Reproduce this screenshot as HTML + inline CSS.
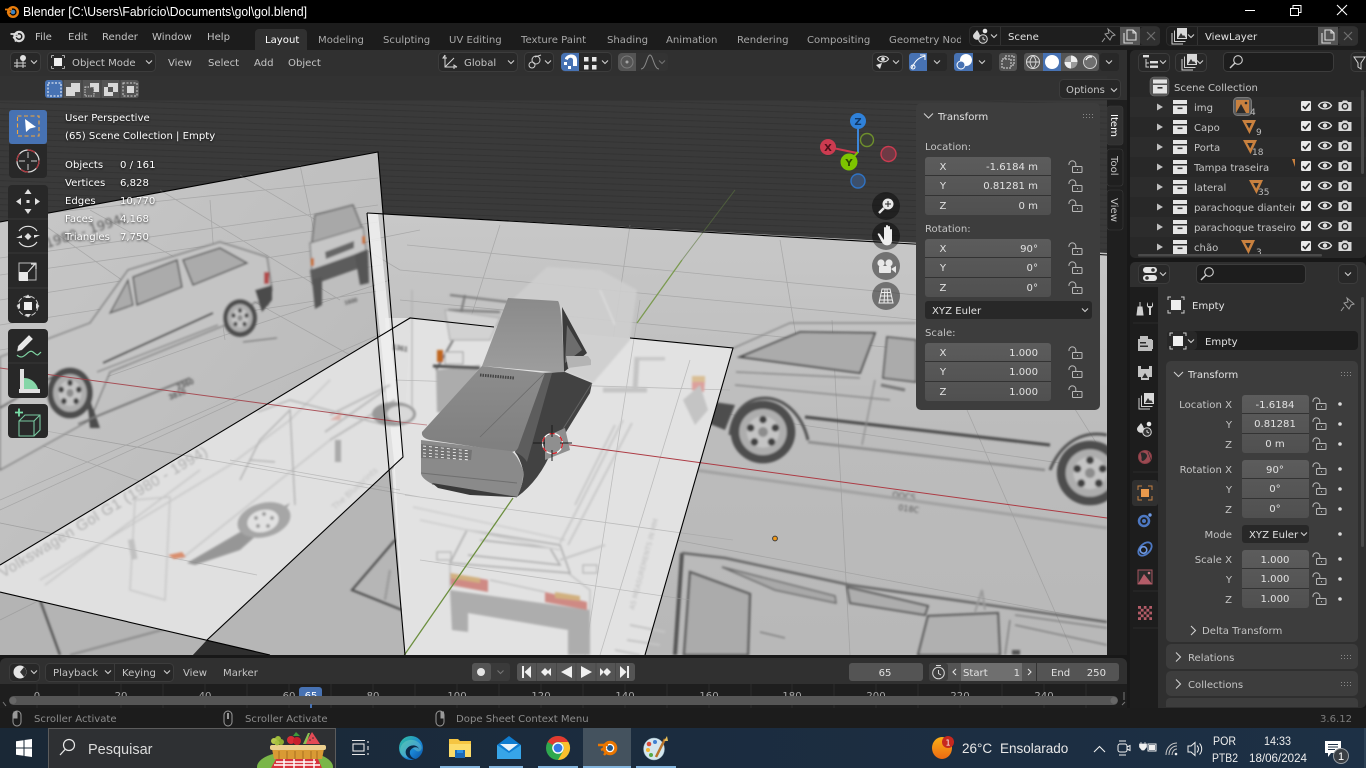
<!DOCTYPE html>
<html lang="pt"><head><meta charset="utf-8"><title>Blender</title>
<style>
html,body{margin:0;padding:0;background:#181818;width:1366px;height:768px;overflow:hidden}
svg{display:block}
text{font-family:"DejaVu Sans","Liberation Sans",sans-serif;font-size:10.1px;fill:#d4d4d4;white-space:pre}
.m{fill:#c4c4c4}
.w{fill:#fff}
.d{fill:#a8a8a8}
.f{fill:#e2e2e2}
.c{text-anchor:middle}
.r{text-anchor:end}
.s{fill:#fff;filter:drop-shadow(0 1px 1px rgba(0,0,0,.75))}
.t{font-family:"Liberation Sans",sans-serif;fill:#fff}
.st{fill:#8c8c8c}
.p{font-family:"Liberation Sans",sans-serif;fill:#555;font-weight:bold}
.l{font-family:"Liberation Sans",sans-serif;font-size:12px;fill:#eee}
</style></head><body>
<svg width="1366" height="768" viewBox="0 0 1366 768" xmlns="http://www.w3.org/2000/svg">
<defs>
<pattern id="gl" width="8" height="6" patternUnits="userSpaceOnUse" patternTransform="rotate(2)"><rect width="8" height="6" fill="#3a3a3a"/><rect width="8" height="1" fill="#333"/></pattern>
<filter id="b" x="-5%" y="-5%" width="110%" height="110%"><feGaussianBlur stdDeviation="1"/></filter>
<linearGradient id="pg" x1="0" y1="0" x2="1" y2="1"><stop offset="0" stop-color="#c8c8c8"/><stop offset="1" stop-color="#b6b6b6"/></linearGradient>
<linearGradient id="pg2" x1="0" y1="0" x2="0" y2="1"><stop offset="0" stop-color="#c8c8c8"/><stop offset=".5" stop-color="#bcbcbc"/><stop offset="1" stop-color="#b8b8b8"/></linearGradient>
<linearGradient id="hood" x1="0" y1="0" x2="0" y2="1"><stop offset="0" stop-color="#8d8d8d"/><stop offset="1" stop-color="#7f7f7f"/></linearGradient>
<linearGradient id="wind" x1="0" y1="0" x2="0" y2="1"><stop offset="0" stop-color="#8a8a8a"/><stop offset="1" stop-color="#9d9d9d"/></linearGradient>
<linearGradient id="tb" x1="0" y1="0" x2="1" y2="0"><stop offset="0" stop-color="#1a2836"/><stop offset=".5" stop-color="#1b2c3f"/><stop offset="1" stop-color="#1d3045"/></linearGradient>
<linearGradient id="fd" x1="0" y1="0" x2="0" y2="1"><stop offset="0" stop-color="#5c5c5c"/><stop offset="1" stop-color="#505050"/></linearGradient>
<linearGradient id="edge" x1="0" y1="0" x2="1" y2="1"><stop offset="0" stop-color="#36c4a0"/><stop offset=".6" stop-color="#1a86d6"/><stop offset="1" stop-color="#0a4fa0"/></linearGradient>
<linearGradient id="wx" x1="0" y1="0" x2="0" y2="1"><stop offset="0" stop-color="#fbb017"/><stop offset="1" stop-color="#ec6a12"/></linearGradient>

<g id="lock" fill="none" stroke="#b8b8b8" stroke-width="1"><path d="M0 5A3.4 3.4 0 0 1 6.8 3.6V6.5"/><rect x="3.5" y="6.5" width="9.5" height="6" rx=".6"/><rect x="8" y="9" width="1" height="1.4" fill="#b8b8b8" stroke="none"/></g>
<g id="coll"><rect x="0" y="0" width="14" height="4" fill="#e4e4e4"/><path d="M0 5.5H14V14H0Z" fill="#e4e4e4"/><rect x="4.5" y="7.5" width="5" height="1.6" fill="#333"/></g>
<g id="chk"><rect width="10" height="10" rx="1.2" fill="#e9e9e9"/><path d="M1.8 5.2L4.2 7.6L8.6 2.4" fill="none" stroke="#282828" stroke-width="1.6"/></g>
<g id="eye"><path d="M-6.5 0C-4 -4.500 4 -4.500 6.5 0C4 4.500 -4 4.500 -6.5 0Z" fill="none" stroke="#e2e2e2" stroke-width="1.300"/><circle r="2.200" fill="#e2e2e2"/></g>
<g id="cam"><path d="M-6.5 -4H-3L-2 -5.5H2L3 -4H6.5V5H-6.5Z" fill="#d8d8d8"/><circle r="3.4" cy=".3" fill="#2a2a2a"/><circle r="2" cy=".3" fill="#d8d8d8"/></g>
<g id="tri"><path d="M0 0H14L7.5 14Z" fill="#c9813f"/><path d="M4.2 3H9.8L7.2 8.5Z" fill="#2b2b2b"/></g>
<g id="chev"><path d="M-3 -1.5L0 1.5L3 -1.5" fill="none" stroke="#d0d0d0" stroke-width="1.1"/></g>
<g id="dots" fill="#8a8a8a"><rect width="1" height="1"/><rect x="3" width="1" height="1"/><rect x="6" width="1" height="1"/><rect x="9" width="1" height="1"/><rect y="3" width="1" height="1"/><rect x="3" y="3" width="1" height="1"/><rect x="6" y="3" width="1" height="1"/><rect x="9" y="3" width="1" height="1"/></g>
<g id="mouse"><rect x="-4" y="-8" width="8" height="15" rx="4" fill="none" stroke="#9a9a9a"/></g>
<g id="objic"><path d="M-8 -5V-8H-5M5 -8H8V-5M8 5V8H5M-5 8H-8V5" fill="none" stroke="#cfcfcf" stroke-width="1"/><rect x="-5" y="-5" width="10" height="10" fill="#eee"/></g>
<g id="vlayer"><path d="M-6 -3V8H5" fill="none" stroke="#d0d0d0"/><path d="M-3.5 -5.5V5.5H7.500" fill="none" stroke="#d0d0d0"/><rect x="-1" y="-8" width="10" height="11" fill="#d8d8d8"/><path d="M0 2L3 -3L5 0L6 -1L8 2Z" fill="#333"/></g>
<g id="scn"><path d="M-5 -6C-2 -2 -1 1 -3 3C-5 5 -9 3 -9 0C-9 -2 -6 -4 -5 -6Z" fill="#d8d8d8"/><circle cx="3" cy="-5" r="2.3" fill="#e8e8e8"/><circle cx="1" cy="3" r="4.300" fill="#333" stroke="#d8d8d8"/><path d="M1 1V3L3 4" stroke="#d8d8d8" fill="none"/></g>
<g id="search"><circle cx="2" cy="-2" r="4.3" fill="none" stroke="#cfcfcf" stroke-width="1.1"/><path d="M-1 1L-6 6" stroke="#cfcfcf" stroke-width="1.4"/></g>
<g id="copy" fill="none" stroke="#dcdcdc" stroke-width="1.1"><path d="M-3 -6H3L6 -3V4H-3Z"/><path d="M-6 -3V7H3"/><path d="M3 -6V-3H6"/></g>
<g id="x"><path d="M-4 -4L4 4M4 -4L-4 4" stroke="#6f6f6f" stroke-width="1.2"/></g>
<g id="pin" fill="none" stroke="#9c9c9c" stroke-width="1"><path d="M-1 -7L6 -1L3 0L1 4L-4 -2L0 -3ZM-4 2L-7 6"/></g>
<g id="wh"><ellipse rx="17" ry="19" fill="#4e4e4e"/><ellipse rx="12.500" ry="14" fill="#adadad"/><ellipse rx="8.500" ry="9.500" fill="#c4c4c4"/><g fill="#3f3f3f"><ellipse cx="0" cy="-7.500" rx="2" ry="2.300"/><ellipse cx="6.500" cy="-2.500" rx="2" ry="2.300"/><ellipse cx="4.500" cy="6" rx="2" ry="2.300"/><ellipse cx="-4.500" cy="6" rx="2" ry="2.300"/><ellipse cx="-6.500" cy="-2.500" rx="2" ry="2.300"/></g><ellipse rx="2.600" ry="3" fill="#8c8c8c"/></g>
</defs>

<!-- base -->
<rect width="1366" height="768" fill="#181818"/>
<!-- title bar -->
<rect width="1366" height="23" fill="#000"/>
<g transform="translate(4,5)"><circle cx="9" cy="7" r="4.800" fill="none" stroke="#e87d0d" stroke-width="2.400"/><circle cx="9" cy="7" r="2.300" fill="#3f81bd"/><path d="M1 4.500H8M3 8L7 6.500M5 11.500L7 9.500" stroke="#e87d0d" stroke-width="1.800" fill="none"/></g>
<text x="23" y="16" class="t" style="font-size:13px" textLength="284" lengthAdjust="spacingAndGlyphs">Blender [C:\Users\Fabrício\Documents\gol\gol.blend]</text>
<path d="M1245 10.500H1255" stroke="#fff"/>
<path d="M1290.500 8.500H1298.500V15.500H1290.500ZM1293 8V5.500H1301V12.500H1298.500" fill="none" stroke="#fff"/>
<path d="M1337 5L1347 15M1347 5L1337 15" stroke="#fff" stroke-width="1.100"/>

<!-- top bar -->
<rect y="23" width="1366" height="27" fill="#1c1c1c"/>
<g transform="translate(10,29)"><circle cx="9" cy="7.500" r="4.600" fill="none" stroke="#dcdcdc" stroke-width="2.200"/><circle cx="9" cy="7.500" r="2" fill="#dcdcdc"/><path d="M0.500 5H8M3 9L7 7M5 12.500L7 10" stroke="#dcdcdc" stroke-width="1.700" fill="none"/></g>
<text x="35" y="40" class="m">File</text><text x="68" y="40" class="m">Edit</text><text x="102" y="40" class="m">Render</text><text x="152" y="40" class="m">Window</text><text x="207" y="40" class="m">Help</text>
<path d="M255 50V33a4 4 0 0 1 4-4H303a4 4 0 0 1 4 4V50Z" fill="#303030"/>
<text x="265" y="43" class="w">Layout</text>
<text x="318" y="43" class="d">Modeling</text><text x="383" y="43" class="d">Sculpting</text><text x="449" y="43" class="d">UV Editing</text><text x="521" y="43" class="d">Texture Paint</text><text x="607" y="43" class="d">Shading</text><text x="666" y="43" class="d">Animation</text><text x="737" y="43" class="d">Rendering</text><text x="807" y="43" class="d">Compositing</text>
<svg x="889" y="28" width="72" height="20"><text x="0" y="15" class="d">Geometry Nodes</text></svg>
<!-- scene selector -->
<rect x="969.500" y="26.500" width="190" height="19" rx="4" fill="#1e1e1e" stroke="#2d2d2d"/>
<rect x="1120" y="27" width="20" height="18" fill="#545454"/>
<rect x="1140" y="27" width="20" height="18" rx="3" fill="#303030"/>
<use href="#scn" x="982" y="36"/><use href="#chev" x="994" y="36"/><path d="M1000.500 27V45" stroke="#333"/>
<text x="1008" y="40" class="f">Scene</text><use href="#pin" x="1109" y="36"/><use href="#copy" x="1130" y="36"/><use href="#x" x="1151" y="36"/>
<rect x="1166.500" y="26.500" width="191" height="19" rx="4" fill="#1e1e1e" stroke="#2d2d2d"/>
<rect x="1318" y="27" width="20" height="18" fill="#545454"/>
<rect x="1338" y="27" width="20" height="18" rx="3" fill="#303030"/>
<use href="#vlayer" x="1178" y="36"/><use href="#chev" x="1191" y="36"/><path d="M1197.500 27V45" stroke="#333"/>
<text x="1205" y="40" class="f">ViewLayer</text><use href="#copy" x="1328" y="36"/><use href="#x" x="1348" y="36"/>

<!-- 3D viewport -->
<svg x="0" y="50" width="1127" height="605">
<rect width="1127" height="605" rx="6" fill="#303030"/>
<g transform="translate(0,-50)">
<rect x="0" y="100" width="1107" height="555" fill="url(#gl)"/>
<!-- plane A left -->
<polygon points="0,222 378,152 403,457 207,640 0,592" fill="url(#pg)"/>
<!-- plane B right -->
<polygon points="367,213 1107,253 1107,655 405,655" fill="url(#pg2)"/>
<polygon points="207,640 403,440 405,655 270,655" fill="#b6b6b6"/>
<polygon points="0,592 207,640 193,655 0,655" fill="#b4b4b4"/>
<polygon points="193,655 207,640 270,655" fill="#2f2f2f"/>
<!-- grid lines -->
<g stroke="#8f8f8f" stroke-width=".8" fill="none" opacity=".5">
<path d="M48 213L378 178M0 258L378 205M0 300L380 240M0 350L385 290M0 415L210 340L390 280M0 500L390 330M0 275L378 222M0 325L382 265"/>
<path d="M90 210L305 330L395 380M240 175L400 270M0 430L300 540M40 430L420 497M0 523L257 575M160 190L340 300M30 215L150 300"/>
<path d="M210 200L215 270L225 340M300 165L320 260"/>
<path d="M407 245L916 295M400 300L916 350M660 537L1107 622M700 410L1107 470M400 270L920 320"/>
<path d="M832 320L850 655M967 410L1073 653M630 225L610 360M780 240L800 360M1000 290L1107 460M500 225L470 320"/>
<path d="M0 510L240 400M0 620L200 520M420 230L370 240"/>
</g>
<!-- left side-view car -->
<g filter="url(#b)">
<path d="M0 357L90 323L128 270L220 242L267 257L272 290L268 305L255 302L225 325L110 372L90 420L0 470Z" fill="#c4c4c4" stroke="#6a6a6a" stroke-width="1.200"/>
<polygon points="133,277 177,260 182,287 137,305" fill="#ababab" stroke="#484848" stroke-width="1.400"/>
<polygon points="183,260 220,248 247,263 193,285" fill="#ababab" stroke="#484848" stroke-width="1.400"/>
<polygon points="110,313 128,280 133,305" fill="#ababab" stroke="#484848" stroke-width="1.200"/>
<path d="M103 363L213 313" stroke="#3c3c3c" stroke-width="2" fill="none"/>
<path d="M97 372L218 325" stroke="#8a8a8a" stroke-width="1.500" fill="none"/>
<path d="M0 408L60 372" stroke="#666" stroke-width="2"/>
<path d="M255 290L272 285V300L262 312Z" fill="#4c4c4c"/>
<rect x="264" y="272" width="5" height="12" fill="#b24a4a"/>
<path d="M85 385L100 428H90Z" fill="#4c4c4c"/>
<use href="#wh" transform="translate(240,318)"/>
<use href="#wh" transform="translate(70,393) scale(1.350)"/>
<path d="M78 424L190 378" stroke="#777" stroke-width="2"/>
<path d="M243 342L277 338" stroke="#666"/>
<!-- front view -->
<polygon points="315,215 353,205 362,228 312,243" fill="#a8a8a8" stroke="#555" stroke-width="1.200"/>
<polygon points="310,243 363,227 366,250 312,273" fill="#c6c6c6" stroke="#666"/>
<polygon points="325,252 354,241 354,248 326,259" fill="#666"/>
<polygon points="310,270 367,250 368,265 312,285" fill="#5c5c5c"/>
<polygon points="312,280 322,277 322,305 315,309" fill="#555"/>
<polygon points="355,255 368,250 369,283 360,285" fill="#555"/>
<rect x="311" y="258" width="3" height="8" fill="#c8702f"/>
<rect x="362" y="236" width="3" height="8" fill="#c8702f"/>
<text x="345" y="305" class="p" style="font-size:6px" transform="rotate(-15 345 305)">1600</text>
<text x="178" y="390" class="p" style="font-size:8px" transform="rotate(-22 178 390)">2360</text>
<text x="170" y="400" class="p" style="font-size:8px" transform="rotate(-22 170 400)">3810</text>
<text x="47" y="248" style="font-size:13px;fill:#5c5c5c" transform="rotate(-18 47 248)">1980 - 1994)</text>
</g>
<!-- right big side view car -->
<g filter="url(#b)">
<polygon points="740,357 800,332 875,333 860,373" fill="#ababab" stroke="#484848" stroke-width="1.800"/>
<polygon points="887,337 916,340 916,382 883,378" fill="#ababab" stroke="#484848" stroke-width="1.500"/>
<path d="M700 363L790 323H916M736 372L860 378M735 385L890 400" stroke="#7e7e7e" stroke-width="1.200" fill="none"/>
<path d="M805 417L1050 445" stroke="#484848" stroke-width="3"/>
<path d="M808 442L1045 470" stroke="#8a8a8a" stroke-width="2.500"/>
<path d="M875 380L862 445" stroke="#888" stroke-width="1.200"/>
<path d="M881 385L905 390" stroke="#777" stroke-width="3"/>
<path d="M1107 435C1080 430 1060 445 1050 470" stroke="#555" stroke-width="3" fill="none"/>
<path d="M730 435C735 385 795 385 808 440" stroke="#555" stroke-width="3" fill="none"/>
<path d="M700 400L735 405L725 430L700 420Z" fill="#4d4d4d"/>
<use href="#wh" transform="translate(763,432) scale(1.900,1.650)"/>
<use href="#wh" transform="translate(1090,473) scale(1.950,1.700)"/>
<text x="892" y="497" style="font-size:8px;fill:#555" transform="rotate(8 892 497)">OOCS</text>
<text x="898" y="510" style="font-size:8px;fill:#555" transform="rotate(8 898 510)">018C</text>
<path d="M695 470L1107 528" stroke="#a0a0a0" stroke-width="3"/>
</g>
<!-- bottom top-view car -->
<g filter="url(#b)" fill="none">
<path d="M682 553L675 655" stroke="#555" stroke-width="4"/>
<path d="M682 553L725 558L850 585L1107 622" stroke="#666" stroke-width="2.500"/>
<polygon points="690,572 750,594 748,655 684,655" fill="#ababab" stroke="#606060" stroke-width="2.500"/>
<polygon points="722,567 835,596 836,603 775,590" fill="#a9a9a9" stroke="#6c6c6c" stroke-width="1.500"/>
<polygon points="847,587 928,606 925,615 850,603" fill="#adadad" stroke="#5c5c5c" stroke-width="2"/>
<polygon points="928,616 998,613 1000,655 918,655" fill="#b0b0b0" stroke="#5c5c5c" stroke-width="2.200"/>
<path d="M760 632L785 638M1015 615L1107 628M1010 620L1005 655M1107 645L1015 625" stroke="#808080" stroke-width="1.500"/>
<rect x="1012" y="650" width="8" height="5" fill="#555"/>
<path d="M975 612L982 590L985 610" stroke="#999" stroke-width="2"/>
</g>
<!-- bottom-left dark strokes -->
<g filter="url(#b)" fill="none" stroke="#505050" stroke-width="2.200">
<path d="M395 540L352 590L402 610"/>
<path d="M40 600L60 655"/>
<path d="M70 655L180 625" stroke="#8c8c8c"/>
<path d="M390 570L385 600" stroke="#999"/>
</g>
<!-- floor -->
<polygon points="410,318 733,348 645,655 405,655 385,318" fill="#e2e2e2"/>
<polygon points="0,565 410,318 403,457 207,640 0,592" fill="#e0e0e0"/>
<polygon points="367,213 378,213 403,457 392,470 405,655 395,470" fill="#f0f0f0" opacity=".85"/>
<!-- floor grid -->
<g stroke="#9e9e9e" stroke-width=".8" fill="none" opacity=".55">
<path d="M0 523L257 575M40 430L420 497M230 460L400 490M405 495L733 540M420 560L690 600M395 380L730 390"/>
<path d="M640 300L585 655M690 360L600 655"/>
</g>
<!-- floor drawings left -->
<g filter="url(#b)" opacity=".85">
<text x="3" y="578" style="font-size:15px;fill:#a6a6a6;font-family:'Liberation Sans',sans-serif" transform="rotate(-31 3 578)" textLength="240">Volkswagen Gol G1 (1980 - 1994)</text>
<text x="335" y="510" style="font-size:8px;fill:#bbb" transform="rotate(-42 335 510)">The Blueprints</text>
<path d="M135 500L130 590L165 600L170 497L135 500Z M40 580L230 465L290 420L330 380M180 560L330 440M45 585L200 470" stroke="#c2c2c2" stroke-width="1.500" fill="none"/>
<path d="M240 480L260 440L290 410L295 505M250 460L275 462M258 412L290 400L385 425" stroke="#a0a0a0" stroke-width="1.200" fill="none"/>
<polygon points="187,563 290,503 285,510 240,550 195,565" fill="#8a8a8a"/>
<ellipse cx="264" cy="520" rx="27" ry="17" fill="#9c9c9c" transform="rotate(-15 264 520)"/>
<ellipse cx="263" cy="521" rx="16" ry="11" fill="#e2e2e2" transform="rotate(-15 263 521)"/>
<g fill="#8c8c8c"><circle cx="256" cy="518" r="2"/><circle cx="264" cy="514" r="2"/><circle cx="272" cy="518" r="2"/><circle cx="268" cy="526" r="2"/><circle cx="258" cy="526" r="2"/></g>
<polygon points="168,555 182,552 186,557 174,559" fill="#d8805a"/>
<rect x="128" y="540" width="6" height="20" fill="#bbb" transform="rotate(-10 128 540)"/>
<path d="M330 415L390 385M325 432L385 390M330 440L395 400" stroke="#b5b5b5" stroke-width="2" fill="none"/>
<ellipse cx="394" cy="414" rx="22" ry="12" fill="#8c8c8c"/>
<ellipse cx="400" cy="414" rx="13" ry="8" fill="#d8d8d8"/>
<polygon points="330,420 342,412 340,420" fill="#dca8a0"/>
<rect x="335" y="440" width="6" height="22" fill="#a0a0a0"/>
</g>
<!-- floor rear view and top plan -->
<g filter="url(#b)">
<path d="M450 590L590 610V655H568V630L468 613V632L452 630Z" fill="#adadad"/>
<polygon points="450,573 488,580 488,592 450,585" fill="#cf8a84"/>
<polygon points="450,573 480,578 480,583 450,578" fill="#d1b07f"/>
<polygon points="545,592 587,602 587,610 545,602" fill="#cf8a84"/>
<polygon points="555,592 580,596 580,601 555,598" fill="#d1b07f"/>
<path d="M467 530L560 545L570 573L450 563ZM480 540L550 548L560 565L468 555" fill="none" stroke="#ababab" stroke-width="1.500"/>
<path d="M450 563V590M568 573L590 590V610M490 580L545 592" stroke="#bcbcbc" stroke-width="1.200" fill="none"/>
<rect x="437" y="552" width="14" height="8" fill="none" stroke="#b4b4b4" stroke-width="1.200"/>
<rect x="583" y="565" width="14" height="8" fill="none" stroke="#b4b4b4" stroke-width="1.200"/>
<path d="M413 507L565 540M420 520L560 550" fill="none" stroke="#cfcfcf" stroke-width="1.800"/>
<path d="M623 420L560 543M632 423L568 545M575 505L615 425" stroke="#c6c6c6" stroke-width="1.800" fill="none"/>
<path d="M605 545L560 560" stroke="#c6c6c6" stroke-width="2"/>
<rect x="635" y="357" width="30" height="3.500" fill="#c8c8c8"/>
<path d="M637 357L635 390M603 390H647" stroke="#c4c4c4" stroke-width="5" fill="none"/>
<path d="M630 625L665 632M627 640L660 645M615 650L640 655" stroke="#c4c4c4" stroke-width="2"/>
<text x="634" y="610" style="font-size:7px;fill:#bcbcbc" transform="rotate(-75 634 610)">A5 MEASUREMENTS IN MM</text>
<path d="M692 377L705 380L704 392L692 390Z" fill="#dca09c"/>
<rect x="692" y="376" width="13" height="6" fill="#d9be94"/>
<path d="M683 400L700 385L708 410L695 425Z" fill="#c4c4c4"/>
</g>
<!-- ghost car behind model + front view -->
<g filter="url(#b)">
<polygon points="547,267 600,270 637,290 630,340 593,383 560,370 512,300" fill="#cecece" opacity=".9"/>
<path d="M600 290L615 325" stroke="#dedede" stroke-width="1.500"/>
<path d="M450 295L508 302M448 310L500 312M436 370L456 335L465 295" stroke="#777" stroke-width="2" fill="none"/>
<path d="M445 310L500 318L490 340H450Z" fill="#d2d2d2" stroke="#a6a6a6"/>
<polygon points="436,370 480,365 470,395 455,405 455,415 437,412" fill="#acacac"/>
<rect x="437" y="350" width="6" height="12" fill="#c0651f"/>
<rect x="445" y="352" width="18" height="12" fill="#e0e0e0" stroke="#999"/>
<path d="M433 366L480 368" stroke="#4a4a4a" stroke-width="3"/>
<path d="M412 290V410" stroke="#aaa"/>
<text x="392" y="349" class="p" style="font-size:7px" transform="rotate(10 392 349)">1361</text>
</g>
<!-- main lines -->
<path d="M0 368L400 422" stroke="#a23c44" stroke-width="1" opacity=".85"/>
<path d="M400 422L427 425" stroke="#b05a60" stroke-width="1" opacity=".6"/>
<path d="M563 444L1107 518" stroke="#ad3b44" stroke-width="1"/>
<path d="M403 657L513 498" stroke="#6c8f3f" stroke-width="1.300"/>
<path d="M637 323L682 260" stroke="#7b9a50" stroke-width="1.300"/>
<path d="M682 260L735 190" stroke="#5e7840" stroke-width="1" opacity=".6"/>
<!-- plane edges -->
<g fill="none" stroke="#000" stroke-width="1.100">
<path d="M0 222L378 152L403 457L207 640"/>
<path d="M367 213L405 655"/>
<path d="M367 213L1107 255"/>
<path d="M0 565L410 318L494 327"/>
<path d="M630 338L733 348L645 655"/>
<path d="M0 592L270 655"/>
</g>
<!-- main model -->
<path d="M508 298L558 301Q562 305 564 373L482 366Z" fill="url(#wind)"/>
<path d="M540 373L565 372L592 383L590 393L563 437L552 450Q540 480 517 497Q525 480 523 470Q520 458 515 452Z" fill="#424242"/>
<path d="M515 452L543 373L552 373L527 462Q524 456 515 452Z" fill="#5d5d5d"/>
<path d="M482 366L545 373L518 448Q516 452 510 452L430 440Q421 438 422 432Z" fill="url(#hood)"/>
<path d="M480 437L545 373" stroke="#6c6c6c" stroke-width=".8"/>
<path d="M421 440L510 451Q516 452 523 470Q524 484 517 497L470 494L432 484Q421 478 421 473Z" fill="#8a8a8a"/>
<path d="M421 473L517 483M432 484L517 497" stroke="#6f6f6f"/>
<polygon points="432,483 517,497 512,497 470,495 438,488" fill="#3a3a3a"/>
<polygon points="562,307 587,353 564,372" fill="#3b3b3b"/>
<polygon points="567,325 582,350 565,363" fill="#6d6d6d"/>
<path d="M566 356L588 356L591 360V365L568 368Z" fill="#b4b4b4"/>
<path d="M556 440L592 383" stroke="#636363" stroke-width="1"/>
<polygon points="421,444 472,450 471,460 421,458" fill="#747474"/>
<g stroke="#fff" stroke-width=".8" stroke-dasharray="3 3" fill="none">
<path d="M423 446L470 451M423 449.500L470 454M423 453L470 457M423 456L470 460"/>
</g>
<path d="M480 375L514 378" stroke="#444" stroke-width="3" stroke-dasharray="1.500 1"/>
<polygon points="545,437 565,428 570,450 545,460" fill="#8f8f8f"/>
<!-- 3D cursor -->
<g fill="none">
<circle cx="552.500" cy="443.500" r="10" stroke="#fff" stroke-width="1.200"/>
<circle cx="552.500" cy="443.500" r="10" stroke="#e01b24" stroke-width="1.200" stroke-dasharray="5 6"/>
<path d="M533 443H545M560 443H572M552 425V437M552 450V461" stroke="#1a1a1a" stroke-width="1"/>
</g>
<circle cx="775" cy="538.500" r="2.400" fill="#f29a1a" stroke="#3a3a3a"/>

<!-- header cover -->
<rect x="0" y="50" width="1127" height="50" fill="#303030"/>
<rect x="0" y="76" width="1107" height="25" fill="#343434" opacity=".6"/>
<!-- toolbar -->
<rect x="9" y="110" width="38" height="34" rx="3" fill="#4772b3"/>
<rect x="17.500" y="116" width="21.500" height="20" fill="none" stroke="#f2a63c" stroke-width="1.100" stroke-dasharray="4 2.500"/>
<path d="M25 119L36 127L30 128.500L26 132Z" fill="#fff"/>
<path d="M9 144H47V174a4 4 0 0 1-4 4H13a4 4 0 0 1-4-4Z" fill="#282828"/>
<circle cx="28" cy="161" r="11" fill="none" stroke="#ddd" stroke-width="1.200"/>
<circle cx="28" cy="161" r="11" fill="none" stroke="#b0333b" stroke-width="1.200" stroke-dasharray="8 9"/>
<path d="M19 161H25M31 161H37M28 152V158M28 164V170" stroke="#ccc"/>
<rect x="8" y="185" width="40" height="138" rx="4" fill="#282828"/>
<path d="M8 219H48M8 253H48M8 288H48" stroke="#383838"/>
<g fill="#e0e0e0"><path d="M28 189L31.500 194H24.500ZM28 214L31.500 209H24.500ZM16 201.500L21 198V205ZM40 201.500L35 198V205Z"/><rect x="26.500" y="200" width="3" height="3"/></g>
<path d="M19 231A11 11 0 0 1 37 231M37 242A11 11 0 0 1 19 242" fill="none" stroke="#e0e0e0" stroke-width="1.100"/>
<path d="M28 233L31.500 236.500L28 240L24.500 236.500ZM16 238L22 235V238ZM40 235L34 238V235Z" fill="#e0e0e0"/>
<rect x="19" y="263" width="17" height="17" fill="none" stroke="#bdbdbd"/><rect x="19" y="272" width="9" height="9" fill="#e8e8e8"/><path d="M28 272L35 264M31 264H36V269" stroke="#e0e0e0" fill="none" stroke-width="1.200"/>
<circle cx="28" cy="306" r="10" fill="none" stroke="#ccc" stroke-dasharray="5 2"/><rect x="24" y="302" width="8" height="8" fill="#eee"/><path d="M28 294.500L31 298H25ZM28 317.500L31 314H25ZM16.500 306L20 303V309ZM39.500 306L36 303V309Z" fill="#ddd"/>
<rect x="8" y="329" width="40" height="69" rx="4" fill="#282828"/>
<path d="M8 363H48" stroke="#383838"/>
<path d="M18 346L29 335L33 339L22 350L17 351.500Z" fill="#e8e8e8" stroke="#555" stroke-width=".5"/>
<path d="M17 355C24 362 28 348 33 352S37 356 41 352" fill="none" stroke="#7fd3a2" stroke-width="1.200"/>
<rect x="20" y="369" width="4" height="24" fill="#e0e0e0"/>
<path d="M24 378C32 378 37 384 38 389H24Z" fill="#86d6a8"/>
<rect x="19" y="389" width="21" height="4" fill="#e0e0e0"/>
<rect x="8" y="404" width="40" height="34" rx="4" fill="#282828"/>
<path d="M19 421H34V436H19ZM19 421L25 415H40V430L34 436M34 421L40 415" fill="none" stroke="#78c8a0" stroke-width="1.100"/>
<path d="M19 408.500V416.500M15 412.500H23" stroke="#78e0a8" stroke-width="1.800"/>
<!-- overlay text -->
<text x="65" y="121" class="s">User Perspective</text>
<text x="65" y="139" class="s">(65) Scene Collection | Empty</text>
<text x="65" y="168" class="s">Objects</text><text x="120" y="168" class="s">0 / 161</text>
<text x="65" y="186" class="s">Vertices</text><text x="120" y="186" class="s">6,828</text>
<text x="65" y="204" class="s">Edges</text><text x="120" y="204" class="s">10,770</text>
<text x="65" y="222" class="s">Faces</text><text x="120" y="222" class="s">4,168</text>
<text x="65" y="240" class="s">Triangles</text><text x="120" y="240" class="s">7,750</text>
<!-- gizmo -->
<path d="M858 121V153" stroke-width="2" fill="none" stroke="#3d86d8"/>
<path d="M828 147L857 153" stroke="#cc3b50" stroke-width="2"/><path d="M849 162L858 152" stroke="#7dc400" stroke-width="2"/>
<circle cx="858" cy="121" r="8" fill="#2f81d9"/><text x="858" y="125" class="c" style="fill:#103868;font-weight:bold;font-size:10px">Z</text>
<circle cx="828" cy="147" r="8" fill="#cc3b50"/><text x="828" y="151" class="c" style="fill:#4e101a;font-weight:bold;font-size:10px">X</text>
<circle cx="849" cy="162" r="8.500" fill="#7dc400"/><text x="849" y="166" class="c" style="fill:#2d4a00;font-weight:bold;font-size:10px">Y</text>
<circle cx="867" cy="140" r="6.500" fill="#3b3f35" stroke="#6e8f2c" stroke-width="1.400"/>
<circle cx="888.500" cy="154" r="7.500" fill="#6e3a45" stroke="#cc3b50" stroke-width="1.400"/>
<circle cx="858" cy="181" r="7" fill="#3c4f6b" stroke="#2f73c4" stroke-width="1.400"/>
<!-- nav buttons -->
<g fill="#000" opacity=".42"><circle cx="886" cy="206" r="14"/><circle cx="886" cy="236" r="14"/><circle cx="886" cy="266" r="14"/><circle cx="886" cy="296" r="14"/></g>
<circle cx="888" cy="204" r="5.500" fill="#e8e8e8"/><path d="M884 208L879 213" stroke="#e8e8e8" stroke-width="2.400"/><path d="M885 204H891M888 201V207" stroke="#222"/>
<path d="M880 234L884 240V228a1 1 0 0 1 2 0V236V226a1 1 0 0 1 2 0V235V227a1 1 0 0 1 2 0V236V230a1 1 0 0 1 2 0V240C892 245 888 246 885 245S880 238 878 235C877 233 879 233 880 234Z" fill="#eee"/>
<circle cx="881" cy="263" r="3.600" fill="#e8e8e8"/><circle cx="889" cy="263" r="3.600" fill="#e8e8e8"/><rect x="879" y="266" width="12" height="7" rx="1" fill="#e8e8e8"/><path d="M891 269L896 266V273Z" fill="#e8e8e8"/>
<path d="M879 303L882 289H890L893 303ZM880.500 296H891.500M885 289L884 303M887 289L888 303M881.500 292.500H890.500M880 300H892" fill="none" stroke="#eee" stroke-width="1"/>
<!-- N panel -->
<rect x="1107" y="100" width="20" height="555" fill="#1f1f1f"/>
<rect x="1107" y="106" width="16" height="39" rx="3" fill="#303030" stroke="#3a3a3a" stroke-width=".6"/>
<rect x="1107" y="149" width="16" height="37" rx="3" fill="#1f1f1f" stroke="#3a3a3a" stroke-width=".6"/>
<rect x="1107" y="190" width="16" height="40" rx="3" fill="#1f1f1f" stroke="#3a3a3a" stroke-width=".6"/>
<text transform="translate(1111,114) rotate(90)" class="w">Item</text>
<text transform="translate(1111,156) rotate(90)" class="m">Tool</text>
<text transform="translate(1111,198) rotate(90)" class="m">View</text>

<rect x="916" y="103" width="184" height="307" rx="5" fill="#3d3d3d"/>
<path d="M924 113.500L928.500 118L933 113.500" fill="none" stroke="#cfcfcf" stroke-width="1.100"/>
<text x="938" y="120" class="f">Transform</text>
<use href="#dots" x="1083" y="114"/>
<text x="925" y="150" class="m">Location:</text>
<rect x="925" y="157" width="126" height="58" rx="3" fill="url(#fd)"/><path d="M925 175.500H1051M925 195.500H1051" stroke="#333"/>
<text x="943" y="170" class="c f">X</text><text x="1038" y="170" class="r f">-1.6184 m</text>
<text x="943" y="189" class="c f">Y</text><text x="1038" y="189" class="r f">0.81281 m</text>
<text x="943" y="209" class="c f">Z</text><text x="1038" y="209" class="r f">0 m</text>
<use href="#lock" x="1069" y="160"/><use href="#lock" x="1069" y="179"/><use href="#lock" x="1069" y="199"/>
<text x="925" y="232" class="m">Rotation:</text>
<rect x="925" y="239" width="126" height="58" rx="3" fill="url(#fd)"/><path d="M925 257.500H1051M925 277.500H1051" stroke="#333"/>
<text x="943" y="252" class="c f">X</text><text x="1038" y="252" class="r f">90°</text>
<text x="943" y="271" class="c f">Y</text><text x="1038" y="271" class="r f">0°</text>
<text x="943" y="291" class="c f">Z</text><text x="1038" y="291" class="r f">0°</text>
<use href="#lock" x="1069" y="242"/><use href="#lock" x="1069" y="261"/><use href="#lock" x="1069" y="281"/>
<rect x="925" y="301" width="167" height="18" rx="3" fill="#282828"/>
<text x="932" y="314" class="f">XYZ Euler</text><use href="#chev" x="1085" y="310"/>
<text x="925" y="336" class="m">Scale:</text>
<rect x="925" y="343" width="126" height="58" rx="3" fill="url(#fd)"/><path d="M925 361.500H1051M925 381.500H1051" stroke="#333"/>
<text x="943" y="356" class="c f">X</text><text x="1038" y="356" class="r f">1.000</text>
<text x="943" y="375" class="c f">Y</text><text x="1038" y="375" class="r f">1.000</text>
<text x="943" y="395" class="c f">Z</text><text x="1038" y="395" class="r f">1.000</text>
<use href="#lock" x="1069" y="346"/><use href="#lock" x="1069" y="365"/><use href="#lock" x="1069" y="385"/>
</g>
</svg>

<!-- viewport header -->
<g>
<rect x="10.500" y="52.500" width="30" height="19" rx="4" fill="#282828" stroke="#3c3c3c"/>
<path d="M14 63H26M17 59V68M23 59V68M14 66H26" stroke="#cfcfcf" fill="none"/><circle cx="23" cy="58" r="3" fill="#e0e0e0"/><use href="#chev" x="34" y="62"/>
<rect x="47.500" y="52.500" width="108" height="19" rx="4" fill="#282828" stroke="#3c3c3c"/>
<g transform="translate(58,62) scale(.8)"><use href="#objic"/></g>
<text x="72" y="66" class="m">Object Mode</text><use href="#chev" x="149" y="62"/>
<text x="168" y="66" class="m">View</text><text x="208" y="66" class="m">Select</text><text x="254" y="66" class="m">Add</text><text x="288" y="66" class="m">Object</text>
<rect x="45" y="80" width="94" height="18" rx="3" fill="#545454"/>
<rect x="45" y="80" width="18" height="18" rx="3" fill="#4772b3"/>
<rect x="48" y="83" width="13" height="13" fill="none" stroke="#fff" stroke-dasharray="2 1.500"/>
<path d="M63 80V98M82 80V98M101 80V98M120 80V98" stroke="#3c3c3c"/>
<path d="M66 96V87H71V83H80V92H75V96Z" fill="#d8d8d8"/>
<rect x="85" y="87" width="9" height="9" fill="none" stroke="#cfcfcf" stroke-dasharray="1.500 1"/><path d="M90 87V83H99V92H94V87Z" fill="#d8d8d8"/>
<path d="M104 87H108V83H118V92H113V96H104Z" fill="#d8d8d8"/><rect x="108" y="87" width="5" height="5" fill="#545454"/>
<rect x="123" y="83" width="14" height="13" fill="none" stroke="#cfcfcf" stroke-dasharray="2 1.500"/><rect x="127" y="86" width="7" height="7" fill="#d8d8d8"/>

<rect x="438.500" y="52.500" width="79" height="19" rx="4" fill="#282828" stroke="#3c3c3c"/>
<path d="M445 55V67H457M445 67L454 58M445 55L443 58H447M457 67L454 65V69" fill="none" stroke="#d6d6d6"/>
<text x="464" y="66" class="m">Global</text><use href="#chev" x="511" y="62"/>
<rect x="524.500" y="52.500" width="29" height="19" rx="4" fill="#282828" stroke="#3c3c3c"/>
<g fill="none" stroke="#d0d0d0"><circle cx="536" cy="60" r="4"/><circle cx="532" cy="65" r="3"/><path d="M535 57L541 55"/></g><use href="#chev" x="548" y="62"/>
<rect x="561.500" y="52.500" width="50" height="19" rx="4" fill="#282828" stroke="#3c3c3c"/>
<path d="M561 57a4 4 0 0 1 4-4H579V71H565a4 4 0 0 1-4-4Z" fill="#4772b3"/>
<path d="M565 58C568 53 577 53 577 60V66H573V60C573 57 568 57 568 60L565 59Z" fill="#fff"/><rect x="564" y="62" width="3" height="3" fill="#fff"/><rect x="568" y="66" width="3" height="3" fill="#fff"/>
<rect x="584" y="57" width="4.500" height="4.500" fill="#e8e8e8"/><rect x="592" y="57" width="4.500" height="4.500" fill="#e8e8e8"/><rect x="584" y="65" width="4.500" height="4.500" fill="#e8e8e8"/><rect x="592" y="65" width="4.500" height="4.500" fill="#e8e8e8"/><use href="#chev" x="605" y="62"/>
<rect x="618" y="53" width="50" height="18" rx="3" fill="#333"/>
<path d="M622 53H636V71H622a4 4 0 0 1-4-4V57a4 4 0 0 1 4-4Z" fill="#545454"/>
<circle cx="627" cy="62" r="6" fill="none" stroke="#7c7c7c"/><circle cx="627" cy="62" r="1.500" fill="#a5a5a5"/>
<path d="M641 69C646 69 647 55 650 55S654 69 659 69" fill="none" stroke="#888"/><use href="#chev" x="662" y="62" opacity=".4"/>

<rect x="872.500" y="52.500" width="30" height="19" rx="4" fill="#282828" stroke="#3c3c3c"/>
<use href="#eye" transform="translate(883,59) scale(.85)"/><path d="M876 65L882 63L880 69Z" fill="#e0e0e0"/><use href="#chev" x="896" y="62"/>
<rect x="909" y="53" width="38" height="18" rx="3" fill="#282828"/><path d="M912 53H927V71H912a3 3 0 0 1-3-3V56a3 3 0 0 1 3-3Z" fill="#4772b3"/>
<path d="M912 68C915 60 920 57 925 56M920 55H925V60" fill="none" stroke="#fff"/><circle cx="913" cy="67" r="2" fill="none" stroke="#fff"/><use href="#chev" x="937" y="62"/>
<rect x="954" y="53" width="38" height="18" rx="3" fill="#282828"/><path d="M957 53H973V71H957a3 3 0 0 1-3-3V56a3 3 0 0 1 3-3Z" fill="#4772b3"/>
<circle cx="966" cy="60" r="6" fill="#fff"/><circle cx="961" cy="65" r="4" fill="#4772b3" stroke="#fff"/><use href="#chev" x="982" y="62"/>
<rect x="999" y="53" width="18" height="18" rx="3" fill="#545454"/>
<path d="M1002 59H1011V68H1002ZM1005 59V56H1014V65H1011" fill="none" stroke="#dcdcdc" stroke-dasharray="2 1"/>
<rect x="1024" y="53" width="75" height="18" rx="3" fill="#545454"/><rect x="1043" y="53" width="18" height="18" fill="#4772b3"/>
<circle cx="1033" cy="62" r="6.500" fill="none" stroke="#d8d8d8"/><path d="M1026.500 62H1039.500M1033 55.500C1029 60 1029 64 1033 68.500C1037 64 1037 60 1033 55.500" fill="none" stroke="#d8d8d8"/>
<circle cx="1052" cy="62" r="7" fill="#fff"/>
<circle cx="1071" cy="62" r="6.500" fill="#9a9a9a"/><path d="M1071 55.500A6.500 6.500 0 0 1 1077.500 62H1071Z M1071 62H1064.500A6.500 6.500 0 0 0 1071 68.500Z" fill="#eee"/>
<circle cx="1090" cy="62" r="6.500" fill="#6f6f6f" stroke="#d0d0d0"/><path d="M1086 60A5 5 0 0 1 1092 57" stroke="#fff" fill="none" stroke-width="1.300"/>
<rect x="1100" y="53" width="19" height="18" rx="3" fill="#282828"/><use href="#chev" x="1109" y="62"/>
<rect x="1059.500" y="79.500" width="61" height="19" rx="4" fill="#282828" stroke="#3c3c3c"/>
<text x="1066" y="93" class="m">Options</text><use href="#chev" x="1114" y="90"/>
</g>

<!-- outliner -->
<rect x="1130" y="50" width="236" height="208" rx="5" fill="#282828"/>
<rect x="1130" y="97" width="236" height="20" fill="#2c2c2c"/><rect x="1130" y="137" width="236" height="20" fill="#2c2c2c"/><rect x="1130" y="177" width="236" height="20" fill="#2c2c2c"/><rect x="1130" y="217" width="236" height="20" fill="#2c2c2c"/>
<rect x="1138.500" y="53.500" width="31" height="18" rx="4" fill="#282828" stroke="#3c3c3c"/>
<path d="M1144 56H1149M1146 59V67H1149M1146 63H1149" stroke="#d0d0d0" fill="none"/><rect x="1143" y="55" width="6" height="2.400" fill="#dcdcdc"/><rect x="1150" y="61" width="8" height="2.400" fill="#dcdcdc"/><rect x="1150" y="65.500" width="8" height="2.400" fill="#dcdcdc"/><use href="#chev" x="1163" y="62"/>
<rect x="1175.500" y="53.500" width="31" height="18" rx="4" fill="#282828" stroke="#3c3c3c"/>
<use href="#vlayer" x="1188" y="62"/><use href="#chev" x="1200" y="62"/>
<rect x="1223.500" y="52.500" width="110" height="19" rx="4" fill="#1d1d1d" stroke="#3c3c3c"/>
<use href="#search" x="1236" y="62"/>
<rect x="1351" y="52.500" width="30" height="19" rx="4" fill="#282828" stroke="#3c3c3c"/>
<path d="M1354 57H1365L1361 63V69L1358 67V63Z" fill="none" stroke="#d8d8d8"/>
<rect x="1150" y="77" width="19" height="19" rx="4" fill="#555" stroke="#707070" stroke-width=".5"/>
<use href="#coll" x="1153" y="79.500"/>
<text x="1174" y="91" class="m">Scene Collection</text>
<!-- rows -->
<path d="M1157 103.500L1163 107L1157 110.500Z M1157 123.500L1163 127L1157 130.500Z M1157 143.500L1163 147L1157 150.500Z M1157 163.500L1163 167L1157 170.500Z M1157 183.500L1163 187L1157 190.500Z M1157 203.500L1163 207L1157 210.500Z M1157 223.500L1163 227L1157 230.500Z M1157 243.500L1163 247L1157 250.500Z" fill="#c0c0c0"/>
<use href="#coll" x="1173" y="100"/><use href="#coll" x="1173" y="120"/><use href="#coll" x="1173" y="140"/><use href="#coll" x="1173" y="160"/><use href="#coll" x="1173" y="180"/><use href="#coll" x="1173" y="200"/><use href="#coll" x="1173" y="220"/><use href="#coll" x="1173" y="240"/>
<text x="1194" y="111" class="m">img</text>
<text x="1194" y="131" class="m">Capo</text>
<text x="1194" y="151" class="m">Porta</text>
<text x="1194" y="171" class="m">Tampa traseira</text>
<text x="1194" y="191" class="m">lateral</text>
<svg x="1194" y="197" width="101" height="20"><text x="0" y="14" class="m">parachoque dianteiro</text></svg>
<text x="1194" y="231" class="m">parachoque traseiro</text>
<text x="1194" y="251" class="m">chão</text>
<rect x="1233.500" y="97.500" width="18" height="18" rx="4" fill="#5d5d5d" stroke="#787878"/>
<rect x="1236" y="100" width="13" height="13" fill="#c9813f"/><path d="M1236 113L1241 104L1246 113Z" fill="#2b2b2b"/><circle cx="1246" cy="103" r="1.300" fill="#2b2b2b"/>
<text x="1250" y="115" style="font-size:9px;fill:#bdbdbd">4</text>
<use href="#tri" x="1242" y="120"/><text x="1256" y="135" style="font-size:9px;fill:#bdbdbd">9</text>
<use href="#tri" x="1243" y="140"/><text x="1252" y="155" style="font-size:9px;fill:#bdbdbd">18</text>
<path d="M1292 159H1295V167Z" fill="#c9813f"/>
<use href="#tri" x="1249" y="180"/><text x="1258" y="195" style="font-size:9px;fill:#bdbdbd">35</text>
<use href="#tri" x="1241" y="240"/><text x="1256" y="255" style="font-size:9px;fill:#bdbdbd">3</text>
<use href="#chk" x="1301" y="101"/><use href="#chk" x="1301" y="121"/><use href="#chk" x="1301" y="141"/><use href="#chk" x="1301" y="161"/><use href="#chk" x="1301" y="181"/><use href="#chk" x="1301" y="201"/><use href="#chk" x="1301" y="221"/><use href="#chk" x="1301" y="241"/>
<use href="#eye" x="1325" y="105.500"/><use href="#eye" x="1325" y="125.500"/><use href="#eye" x="1325" y="145.500"/><use href="#eye" x="1325" y="165.500"/><use href="#eye" x="1325" y="185.500"/><use href="#eye" x="1325" y="205.500"/><use href="#eye" x="1325" y="225.500"/><use href="#eye" x="1325" y="245.500"/>
<use href="#cam" x="1345" y="106"/><use href="#cam" x="1345" y="126"/><use href="#cam" x="1345" y="146"/><use href="#cam" x="1345" y="166"/><use href="#cam" x="1345" y="186"/><use href="#cam" x="1345" y="206"/><use href="#cam" x="1345" y="226"/><use href="#cam" x="1345" y="246"/>
<rect x="1361" y="90" width="3" height="84" rx="1.500" fill="#4a4a4a"/>
<rect x="1138" y="254" width="184" height="2.500" rx="1" fill="#4a4a4a"/>

<!-- properties -->
<rect x="1130" y="262" width="236" height="446" rx="5" fill="#2f2f2f"/>
<rect x="1130" y="287" width="28" height="421" fill="#1d1d1d"/>
<rect x="1138.500" y="264.500" width="31" height="19" rx="4" fill="#282828" stroke="#3c3c3c"/>
<rect x="1143" y="267" width="14" height="6" rx="3" fill="#e4e4e4"/><circle cx="1153" cy="270" r="1.800" fill="#333"/><rect x="1143" y="275" width="14" height="6" rx="3" fill="#e4e4e4"/><circle cx="1147" cy="278" r="1.800" fill="#333"/><use href="#chev" x="1163" y="274"/>
<rect x="1196.500" y="264.500" width="109" height="19" rx="4" fill="#1d1d1d" stroke="#3c3c3c"/>
<use href="#search" x="1207" y="274"/>
<rect x="1338.500" y="264.500" width="19" height="19" rx="4" fill="#282828" stroke="#3c3c3c"/><use href="#chev" x="1348" y="274"/>
<!-- tabs -->
<rect x="1132" y="480" width="26" height="26" rx="3" fill="#303030"/>
<path d="M1133 323H1158M1133 472H1158M1133 591H1158M1133 628H1158" stroke="#2b2b2b"/>
<path d="M1140 302V307M1138 307H1142L1143 315H1137Z" stroke="#d0d0d0" fill="#d0d0d0"/><path d="M1148 302C1146 305 1147 307 1149 308V315H1151V308C1153 307 1154 305 1152 302V306H1148Z" fill="#d0d0d0"/>
<path d="M1138 339H1152V351H1138Z" fill="#bdbdbd"/><rect x="1140" y="336" width="8" height="3" fill="#bdbdbd"/><rect x="1140" y="342" width="6" height="1.500" fill="#2b2b2b"/><rect x="1140" y="345.500" width="8" height="1.500" fill="#2b2b2b"/><rect x="1150" y="340" width="3" height="9" fill="#bdbdbd"/>
<path d="M1138 366H1152V377H1149V380H1141V377H1138Z" fill="#c4c4c4"/><rect x="1141" y="366" width="8" height="3" fill="#1d1d1d"/><path d="M1142 378L1145 373L1148 378Z" fill="#2b2b2b"/>
<use href="#vlayer" transform="translate(1145,401)"/>
<use href="#scn" transform="translate(1146,429)"/>
<circle cx="1145" cy="457" r="6.500" fill="#9b4a52" stroke="#8a3e46"/><path d="M1141 453C1145 452 1148 455 1146 458S1141 462 1142 458Z M1148 452L1151 460" fill="#2a2a2a" stroke="#2a2a2a" stroke-width=".6"/>
<path d="M1138 490V486H1142M1148 486H1152V490M1152 496V500H1148M1142 500H1138V496" fill="none" stroke="#c58042"/><rect x="1141" y="489" width="8" height="8" fill="#e9994c"/>
<circle cx="1144" cy="521" r="5" fill="none" stroke="#4d78c2" stroke-width="2.500"/><circle cx="1144" cy="521" r="2" fill="#4d78c2"/><circle cx="1150" cy="515" r="1.700" fill="#6f9be6"/>
<ellipse cx="1145" cy="549" rx="5" ry="8" transform="rotate(45 1145 549)" fill="none" stroke="#4d78c2" stroke-width="1.800"/><circle cx="1143.500" cy="550" r="3.300" fill="none" stroke="#6f9be6" stroke-width="1.600"/>
<rect x="1138" y="570" width="14" height="14" fill="#2b2b2b" stroke="#a85560"/><path d="M1138 584L1144 574L1152 584Z" fill="#b35c68"/><circle cx="1149" cy="573" r="1.300" fill="#cf7f89"/>
<rect x="1138" y="606" width="14" height="14" fill="#b35c68"/><g fill="#1d1d1d"><rect x="1141" y="606" width="2.800" height="2.800"/><rect x="1146.500" y="606" width="2.800" height="2.800"/><rect x="1138" y="608.800" width="2.800" height="2.800"/><rect x="1143.600" y="608.800" width="2.800" height="2.800"/><rect x="1149.200" y="608.800" width="2.800" height="2.800"/><rect x="1141" y="611.600" width="2.800" height="2.800"/><rect x="1146.500" y="611.600" width="2.800" height="2.800"/><rect x="1138" y="614.400" width="2.800" height="2.800"/><rect x="1143.600" y="614.400" width="2.800" height="2.800"/><rect x="1149.200" y="614.400" width="2.800" height="2.800"/><rect x="1141" y="617.200" width="2.800" height="2.800"/><rect x="1146.500" y="617.200" width="2.800" height="2.800"/></g>
<use href="#objic" x="1176" y="305"/>
<text x="1192" y="309" class="f">Empty</text>
<use href="#pin" x="1348" y="305"/>
<rect x="1167" y="331" width="191" height="19" rx="4" fill="#1d1d1d"/>
<rect x="1167" y="331" width="30" height="19" rx="4" fill="#282828"/>
<g transform="translate(1178,341)"><use href="#objic"/></g><use href="#chev" x="1191" y="341"/>
<text x="1205" y="345" class="f">Empty</text>
<rect x="1166" y="361" width="192" height="281" rx="5" fill="#3d3d3d"/>
<path d="M1174 372L1178.500 376.500L1183 372" fill="none" stroke="#cfcfcf" stroke-width="1.100"/>
<text x="1188" y="378" class="f">Transform</text><use href="#dots" x="1341" y="372"/>
<text x="1232" y="408" class="r m">Location X</text><text x="1232" y="428" class="r m">Y</text><text x="1232" y="448" class="r m">Z</text>
<rect x="1242" y="395" width="67" height="58" rx="3" fill="url(#fd)"/><path d="M1242 413.500H1309M1242 433.500H1309" stroke="#333"/>
<text x="1275" y="408" class="c f">-1.6184</text><text x="1275" y="427" class="c f">0.81281</text><text x="1275" y="447" class="c f">0 m</text>
<text x="1232" y="473" class="r m">Rotation X</text><text x="1232" y="493" class="r m">Y</text><text x="1232" y="513" class="r m">Z</text>
<rect x="1242" y="460" width="67" height="58" rx="3" fill="url(#fd)"/><path d="M1242 478.500H1309M1242 498.500H1309" stroke="#333"/>
<text x="1275" y="473" class="c f">90°</text><text x="1275" y="492" class="c f">0°</text><text x="1275" y="512" class="c f">0°</text>
<text x="1232" y="538" class="r m">Mode</text>
<rect x="1242" y="525" width="67" height="18" rx="3" fill="#282828"/><text x="1249" y="538" class="f">XYZ Euler</text><use href="#chev" x="1304" y="534"/>
<text x="1232" y="563" class="r m">Scale X</text><text x="1232" y="583" class="r m">Y</text><text x="1232" y="603" class="r m">Z</text>
<rect x="1242" y="550" width="67" height="58" rx="3" fill="url(#fd)"/><path d="M1242 568.500H1309M1242 588.500H1309" stroke="#333"/>
<text x="1275" y="563" class="c f">1.000</text><text x="1275" y="582" class="c f">1.000</text><text x="1275" y="602" class="c f">1.000</text>
<use href="#lock" x="1313" y="397"/><use href="#lock" x="1313" y="417"/><use href="#lock" x="1313" y="437"/><use href="#lock" x="1313" y="462"/><use href="#lock" x="1313" y="482"/><use href="#lock" x="1313" y="502"/><use href="#lock" x="1313" y="552"/><use href="#lock" x="1313" y="572"/><use href="#lock" x="1313" y="592"/>
<g fill="#dcdcdc"><circle cx="1340" cy="404" r="1.800"/><circle cx="1340" cy="424" r="1.800"/><circle cx="1340" cy="444" r="1.800"/><circle cx="1340" cy="469" r="1.800"/><circle cx="1340" cy="489" r="1.800"/><circle cx="1340" cy="509" r="1.800"/><circle cx="1340" cy="534" r="1.800"/><circle cx="1340" cy="559" r="1.800"/><circle cx="1340" cy="579" r="1.800"/><circle cx="1340" cy="599" r="1.800"/></g>
<path d="M1191 626L1195.500 630.500L1191 635" fill="none" stroke="#cfcfcf" stroke-width="1.100"/>
<text x="1202" y="634" class="m">Delta Transform</text>
<rect x="1166" y="644" width="192" height="25" rx="5" fill="#3d3d3d"/>
<path d="M1176 652.500L1180.500 657L1176 661.500" fill="none" stroke="#cfcfcf" stroke-width="1.100"/><text x="1188" y="661" class="m">Relations</text><use href="#dots" x="1341" y="655"/>
<rect x="1166" y="671" width="192" height="25" rx="5" fill="#3d3d3d"/>
<path d="M1176 679.500L1180.500 684L1176 688.500" fill="none" stroke="#cfcfcf" stroke-width="1.100"/><text x="1188" y="688" class="m">Collections</text><use href="#dots" x="1341" y="682"/>
<path d="M1166 707V702a4 4 0 0 1 4-4H1354a4 4 0 0 1 4 4V707Z" fill="#3d3d3d"/>
<rect x="1361" y="297" width="3" height="250" rx="1.500" fill="#4a4a4a"/>

<!-- timeline -->
<path d="M0 664a6 6 0 0 1 6-6H1121a6 6 0 0 1 6 6V684H0Z" fill="#303030"/>
<rect y="684" width="1127" height="24" fill="#1e1e1e"/>
<rect x="9.500" y="663.500" width="30" height="18" rx="4" fill="#282828" stroke="#3c3c3c"/>
<circle cx="20" cy="672" r="6.500" fill="#e4e4e4"/><path d="M20 672L24 667A6.500 6.500 0 0 1 24 677Z" fill="#333"/><use href="#chev" x="34" y="672"/>
<rect x="45.500" y="663.500" width="128" height="18" rx="4" fill="#282828" stroke="#3c3c3c"/><path d="M114.500 664V681" stroke="#3c3c3c"/>
<text x="53" y="676" class="m">Playback</text><use href="#chev" x="108" y="672"/>
<text x="122" y="676" class="m">Keying</text><use href="#chev" x="167" y="672"/>
<text x="183" y="676" class="m">View</text><text x="223" y="676" class="m">Marker</text>
<rect x="472" y="663" width="38" height="18" rx="3" fill="#3a3a3a"/><rect x="472" y="663" width="19" height="18" rx="3" fill="#545454"/>
<circle cx="481" cy="672" r="4" fill="#e6e6e6"/><use href="#chev" x="500.500" y="672" opacity=".4"/>
<rect x="517" y="663" width="118" height="18" rx="3" fill="#545454"/>
<path d="M536.500 663V681M556.500 663V681M576 663V681M596 663V681M615.500 663V681" stroke="#474747"/>
<g fill="#f0f0f0">
<rect x="522" y="666" width="2" height="12"/><path d="M531 666V678L524.500 672Z"/>
<path d="M545 668L549 672L545 676L541 672ZM551 668V676L547 672Z"/>
<path d="M572 666V678L561 672Z"/>
<path d="M581 666V678L592 672Z"/>
<path d="M607 668L611 672L607 676L603 672ZM600 668V676L604 672Z"/>
<path d="M620 666V678L626.500 672Z"/><rect x="627" y="666" width="2" height="12"/>
</g>
<rect x="849" y="663" width="74" height="18" rx="3" fill="#545454"/><text x="885" y="676" class="c f">65</text>
<rect x="929" y="663" width="190" height="18" rx="3" fill="#545454"/>
<rect x="929" y="663" width="19" height="18" rx="3" fill="#3f3f3f"/>
<circle cx="938.500" cy="673" r="5.800" fill="none" stroke="#d8d8d8"/><path d="M938.500 670V673.500L941 675M936 665.500H941" stroke="#d8d8d8" fill="none"/>
<rect x="961" y="663" width="61" height="18" fill="#6f6f6f"/>
<path d="M1036.500 663V681" stroke="#333"/>
<path d="M956 669L953 672L956 675M1028 669L1031 672L1028 675" stroke="#e2e2e2" fill="none" stroke-width="1.100"/>
<text x="963" y="676" class="f">Start</text><text x="1020" y="676" class="r f">1</text>
<text x="1051" y="676" class="f">End</text><text x="1106" y="676" class="r f">250</text>
<!-- ruler -->
<path stroke="#2c2c2c" d="M37 684V708M79 684V708M121 684V708M163 684V708M205 684V708M247 684V708M289 684V708M331 684V708M373 684V708M415 684V708M457 684V708M499 684V708M541 684V708M583 684V708M625 684V708M667 684V708M709 684V708M751 684V708M792 684V708M834 684V708M876 684V708M918 684V708M960 684V708M1002 684V708M1044 684V708M1086 684V708"/>
<text x="37" y="699" class="c d">0</text><text x="121" y="699" class="c d">20</text><text x="205" y="699" class="c d">40</text><text x="289" y="699" class="c d">60</text><text x="373" y="699" class="c d">80</text><text x="457" y="699" class="c d">100</text><text x="541" y="699" class="c d">120</text><text x="625" y="699" class="c d">140</text><text x="709" y="699" class="c d">160</text><text x="792" y="699" class="c d">180</text><text x="876" y="699" class="c d">200</text><text x="960" y="699" class="c d">220</text><text x="1044" y="699" class="c d">240</text>
<rect x="299" y="687" width="23" height="14" rx="3" fill="#4772b3"/><text x="311" y="699" class="c w">65</text>
<rect x="9" y="696" width="1109" height="9" rx="4.500" fill="#555"/>
<circle cx="13" cy="700.500" r="3.500" fill="#7a7a7a" opacity=".5"/><circle cx="1114" cy="700.500" r="3.500" fill="#7a7a7a" opacity=".5"/>
<rect x="310" y="704" width="2" height="4" fill="#4772b3"/>
<path d="M3 702L6 706" stroke="#777"/><path d="M1122 705L1125 702M1124 692V700" stroke="#777"/>

<!-- status bar -->
<rect y="708" width="1366" height="20" fill="#1c1c1c"/>
<use href="#mouse" x="17" y="719"/><rect x="13.500" y="711.500" width="4" height="7" fill="#9a9a9a"/>
<text x="34" y="722" class="st">Scroller Activate</text>
<use href="#mouse" x="228" y="719"/><rect x="227" y="713" width="2" height="6" fill="#9a9a9a"/>
<text x="245" y="722" class="st">Scroller Activate</text>
<use href="#mouse" x="440" y="719"/><rect x="440.500" y="711.500" width="3.500" height="7" fill="#9a9a9a"/>
<text x="456" y="722" class="st">Dope Sheet Context Menu</text>
<text x="1320" y="722" style="fill:#7c7c7c">3.6.12</text>

<!-- taskbar -->
<rect y="728" width="1366" height="40" fill="url(#tb)"/>
<g fill="#fff"><path d="M16 741.200L23.500 740.200V747.500H16Z"/><path d="M24.500 740L32 739V747.500H24.500Z"/><path d="M16 748.500H23.500V755.800L16 754.800Z"/><path d="M24.500 748.500H32V757L24.500 756Z"/></g>
<rect x="48.500" y="728.500" width="287" height="40" fill="#2e3033" stroke="#5c5c5c"/>
<circle cx="69" cy="745" r="5.500" fill="none" stroke="#e8e8e8" stroke-width="1.200"/><path d="M65 749.500L60 755" stroke="#e8e8e8" stroke-width="1.300"/>
<text x="88" y="754" style="font-family:'Liberation Sans',sans-serif;font-size:14.500px;fill:#dcdcdc">Pesquisar</text>
<!-- picnic -->
<svg x="256" y="729" width="80" height="39">
<ellipse cx="39" cy="38" rx="38" ry="16" fill="#7ab648"/>
<path d="M16 20H68L66 30H18Z" fill="#d99a34"/>
<path d="M23 22V30M31 22V30M39 22V30M47 22V30M55 22V30M61 22V30" stroke="#a86f1e"/>
<rect x="14" y="16" width="56" height="5" rx="2" fill="#eccf8e"/>
<path d="M20 30H62L66 39H15Z" fill="#d8323c"/>
<path d="M20 33H60M18 36H64M28 30V39M38 30V39M48 30V39M58 30V39" stroke="#fff" stroke-width="1.400"/>
<circle cx="22" cy="10" r="3" fill="#9dbb3a"/><circle cx="18" cy="12" r="3" fill="#b8c94e"/><circle cx="25" cy="13" r="3" fill="#8eac30"/><circle cx="21" cy="14" r="2.500" fill="#a8c040"/>
<circle cx="35" cy="11" r="4" fill="#d72b35"/><circle cx="41" cy="12" r="4" fill="#c8202c"/><path d="M37 7L40 3L44 7" fill="#3f9a3a"/>
<path d="M49 15L56 3L64 15Z" fill="#e34b55"/><path d="M47 15L52 4L54 4L50 15Z" fill="#8cc152"/><circle cx="54" cy="11" r=".8" fill="#333"/><circle cx="57" cy="9" r=".8" fill="#333"/>
</svg>
<!-- task view -->
<g fill="none" stroke="#e8e8e8" stroke-width="1.100"><rect x="353" y="744" width="11" height="7"/><path d="M352 740.500H365M352 754.500H365M368 741V743M368 746V750M368 753V755"/></g>
<!-- edge -->
<circle cx="411" cy="748" r="12" fill="url(#edge)"/>
<path d="M400 750C401 741 411 737 418 742C422 745 423 749 420 751C417 753 415 749 412 748C407 747 404 753 408 758C403 757 400 754 400 750Z" fill="#8fdcc0" opacity=".35"/>
<path d="M406 750C409 744 417 744 419 749C417 746 412 747 410 751C409 755 412 759 417 759C411 761 404 756 406 750Z" fill="#0d2a48"/>
<!-- explorer -->
<path d="M449 739H458L460 741H471V757H449Z" fill="#f5c542"/><rect x="449" y="744" width="22" height="13" fill="#fcdc6a"/><rect x="455" y="750" width="10" height="8" fill="#1d6bb8"/><rect x="457" y="750" width="6" height="3" fill="#2c93e6"/>
<!-- mail -->
<path d="M497 745L509 736L521 745V759H497Z" fill="#0f7cd0"/><path d="M497 745L509 753L521 745V759H497Z" fill="#37a5e8"/><path d="M500 744H518L509 751Z" fill="#e8f3fb"/>
<!-- chrome -->
<circle cx="558" cy="748" r="12" fill="#2fa84f"/>
<path d="M558 736A12 12 0 0 1 568.400 742H558A6 6 0 0 0 552.800 745L547.600 742A12 12 0 0 1 558 736Z" fill="#e3392f"/>
<path d="M568.400 742A12 12 0 0 1 558 760L563.200 751A6 6 0 0 0 558 742Z" fill="#fbc02d"/>
<circle cx="558" cy="748" r="5.800" fill="#fff"/><circle cx="558" cy="748" r="4.400" fill="#3579e6"/>
<!-- blender -->
<rect x="583" y="728" width="48" height="40" fill="#44525e"/>
<g transform="translate(598,739)"><circle cx="12" cy="9" r="5.800" fill="#fff" stroke="#ea7600" stroke-width="3"/><circle cx="12" cy="9" r="3" fill="#265787"/><path d="M0 6H10M3 11L8 8.500M6 16L9 12.500" stroke="#ea7600" stroke-width="2.400" fill="none"/></g>
<!-- paint -->
<ellipse cx="654" cy="749" rx="10.500" ry="11" fill="#d4e6ee" stroke="#8daab8" stroke-width=".5"/><circle cx="649" cy="744" r="2.300" fill="#d84a3a"/><circle cx="655" cy="742" r="2" fill="#3f7fd0"/><circle cx="648" cy="750" r="2" fill="#f2b632"/><circle cx="651" cy="755" r="2" fill="#56a845"/>
<path d="M656 757L665 739" stroke="#b8742a" stroke-width="2.500"/><path d="M664 741L667 736L668 741Z" fill="#e8c05a"/>
<!-- underlines -->
<g fill="#84b5de"><rect x="440" y="766" width="40" height="2"/><rect x="489" y="766" width="34" height="2"/><rect x="538" y="766" width="40" height="2"/><rect x="583" y="766" width="48" height="2"/><rect x="636" y="766" width="40" height="2"/></g>
<!-- weather -->
<ellipse cx="942" cy="748" rx="10" ry="11" fill="url(#wx)"/>
<circle cx="948" cy="742" r="6" fill="#c6281f"/><text x="948" y="745.500" class="c" style="font-size:8px;fill:#fff">1</text>
<text x="962" y="753" style="font-family:'Liberation Sans',sans-serif;font-size:13.500px;fill:#e8e8e8">26°C</text>
<text x="1000" y="753" style="font-family:'Liberation Sans',sans-serif;font-size:13.500px;fill:#e8e8e8">Ensolarado</text>
<!-- tray -->
<path d="M1094 752L1099.500 746.500L1105 752" fill="none" stroke="#f0f0f0" stroke-width="1.100"/>
<g fill="none" stroke="#f0f0f0"><rect x="1118" y="744" width="9" height="8" rx="2"/><path d="M1127 747L1130 745.500V750.500L1127 749M1119 741H1126M1119 755H1126"/></g>
<path d="M1141 744V742M1145 744V742M1139.500 744H1146.500V747L1144 750H1142L1139.500 747Z" fill="#f0f0f0" stroke="#f0f0f0" stroke-width=".7"/><rect x="1148" y="744" width="8" height="7" fill="none" stroke="#f0f0f0"/><rect x="1149" y="745" width="6" height="5" fill="#f0f0f0"/>
<g fill="none" stroke="#c8c8c8"><path d="M1166 755C1166 748 1171 743 1177 743M1169 755C1169 750 1172 746 1177 746M1172 755C1172 752 1174 749 1177 749"/></g><circle cx="1176" cy="754" r="1.300" fill="#f0f0f0"/>
<path d="M1188 746H1191L1195 742.500V755.500L1191 752H1188Z" fill="none" stroke="#f0f0f0"/><path d="M1197 745.500A5 5 0 0 1 1197 752.500M1199.500 743.500A8 8 0 0 1 1199.500 754.500" fill="none" stroke="#f0f0f0"/>
<text x="1213" y="745" class="l" textLength="23" lengthAdjust="spacingAndGlyphs">POR</text>
<text x="1212" y="762" class="l" textLength="26" lengthAdjust="spacingAndGlyphs">PTB2</text>
<text x="1264" y="745" class="l" textLength="27" lengthAdjust="spacingAndGlyphs">14:33</text>
<text x="1249" y="762" class="l" textLength="58" lengthAdjust="spacingAndGlyphs">18/06/2024</text>
<path d="M1325 741H1341V753H1331L1328 757V753H1325Z" fill="#fff"/><path d="M1328 744.500H1338M1328 747H1338M1328 749.500H1335" stroke="#1d3045"/>
<circle cx="1341" cy="756" r="7.500" fill="#3a3f44" stroke="#9aa0a5" stroke-width="1"/><text x="1341" y="760" class="c" style="font-family:'Liberation Sans',sans-serif;font-size:11px;fill:#fff">1</text>
<rect x="1364" y="728" width="2" height="40" fill="#3d5166" opacity=".5"/>
</svg>
</body></html>
